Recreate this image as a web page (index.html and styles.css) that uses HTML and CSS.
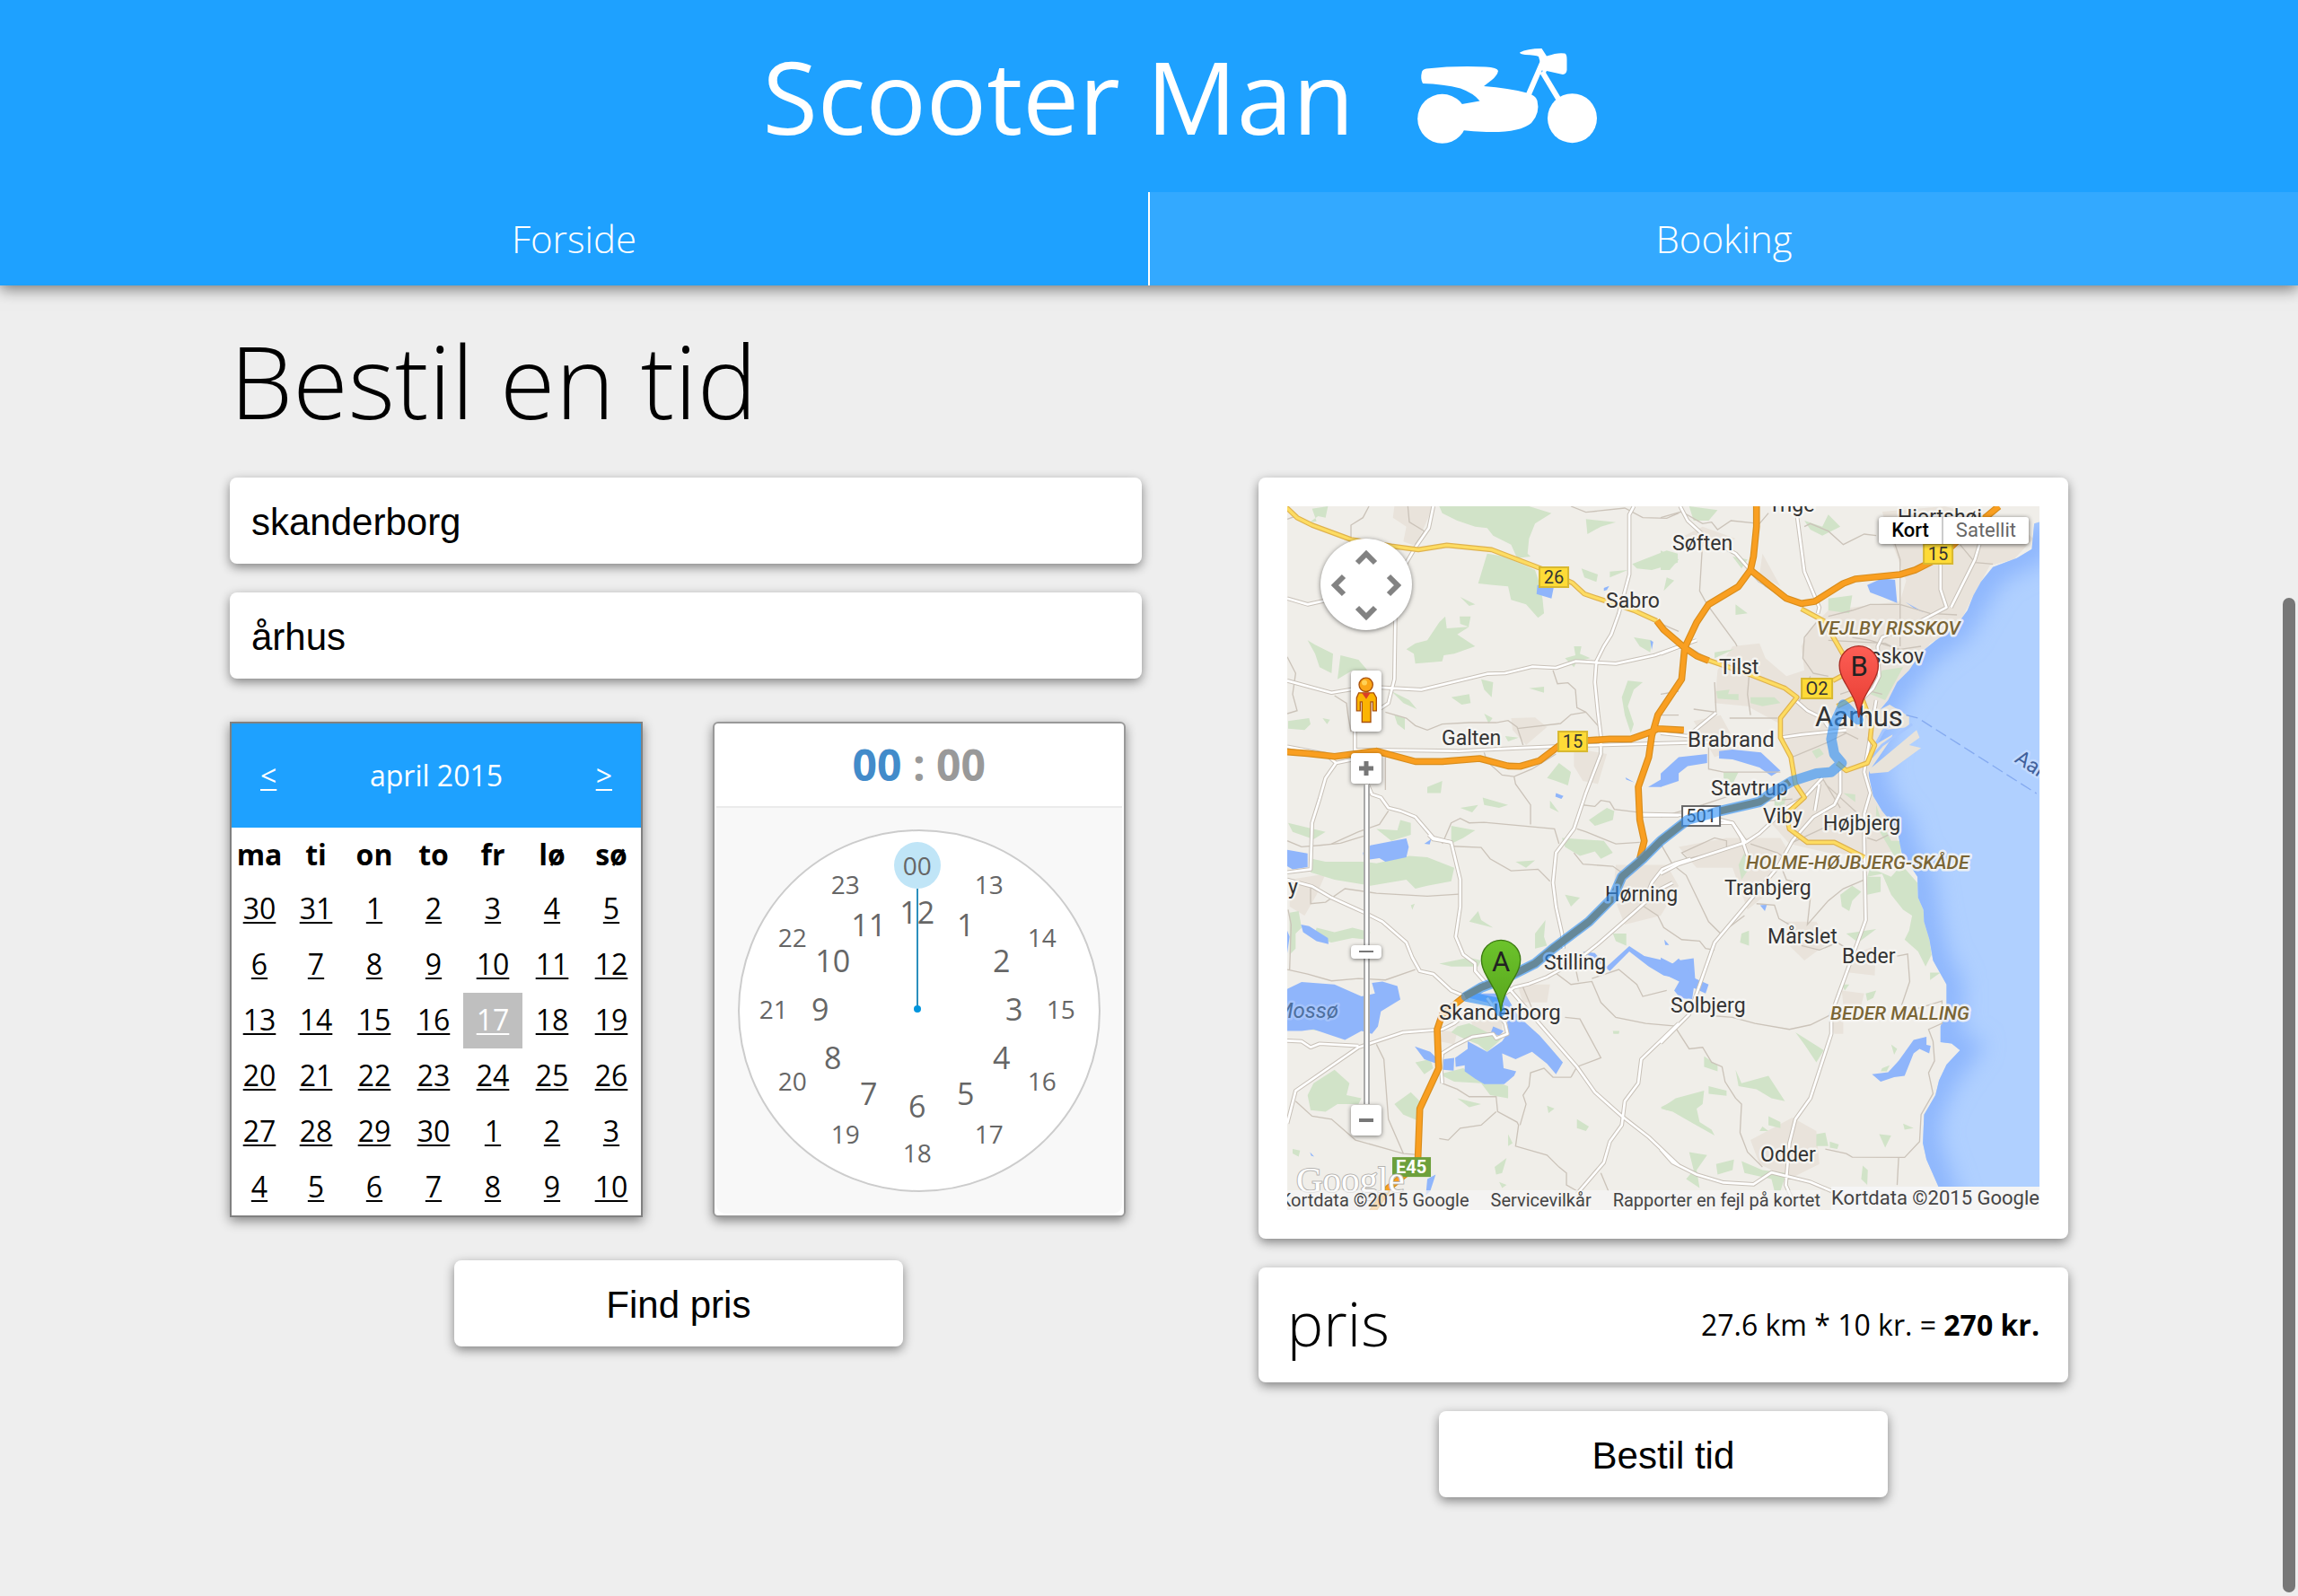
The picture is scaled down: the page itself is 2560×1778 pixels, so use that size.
FILE: index.html
```html
<!DOCTYPE html>
<html lang="da">
<head>
<meta charset="utf-8">
<title>Scooter Man - Booking</title>
<meta name="viewport" content="width=device-width, initial-scale=1">
<link rel="stylesheet" href="styles.css">
</head>
<body>
<header class="site-header">
  <div class="brand">
    <span class="brand-name">Scooter Man</span>
    <svg class="brand-icon" viewBox="1576 50 204 114" aria-hidden="true">
      <g fill="#fff">
        <circle cx="1605.700" cy="132.300" r="27.500"/>
        <circle cx="1750.500" cy="131.700" r="27.500"/>
        <path d="M1583 80Q1584 77 1588 76.500Q1620 73 1654 74.500Q1667 75 1668 79Q1667 84 1661 89L1652 96Q1680 98 1700 103.500Q1710 106 1711.500 112Q1715 126 1705 137Q1692 148 1655 147Q1640 146.500 1627 145L1618 122L1627.500 116L1647.500 112.500Q1641 104 1626 98.500Q1607 93.500 1584 93Q1581 88 1583 80Z"/>
        <path d="M1692 58.500Q1700 54 1716.500 54L1722 62.500Q1735 58 1742 59.500Q1744.500 60 1744.500 66V78Q1744 82.500 1740 83L1722 79L1719 85L1713 63Q1710 61.500 1698 61Q1692 60 1692 58.500Z"/>
      </g>
      <path d="M1702 105L1718 68M1717 80L1735 110" fill="none" stroke="#fff" stroke-width="6"/>
    </svg>
  </div>
  <nav class="tabs">
    <a href="#forside">Forside</a>
    <a href="#booking" class="active">Booking</a>
  </nav>
</header>

<main class="page">
  <h1>Bestil en tid</h1>
  <div class="columns">
    <form class="order">
      <input class="box field" type="text" value="skanderborg" aria-label="Fra">
      <input class="box field" type="text" value="århus" aria-label="Til">
      <div class="when">
        <table class="calendar">
          <colgroup><col class="c-first"><col class="c-second"><col><col><col><col><col></colgroup>
          <thead>
            <tr class="month"><td colspan="7"><div class="month-bar"><a href="#prev">&lt;</a><span>april 2015</span><a href="#next">&gt;</a></div></td></tr>
            <tr class="days"><th>ma</th><th>ti</th><th>on</th><th>to</th><th>fr</th><th>lø</th><th>sø</th></tr>
          </thead>
          <tbody>
            <tr><td><a href="#d">30</a></td><td><a href="#d">31</a></td><td><a href="#d">1</a></td><td><a href="#d">2</a></td><td><a href="#d">3</a></td><td><a href="#d">4</a></td><td><a href="#d">5</a></td></tr>
            <tr><td><a href="#d">6</a></td><td><a href="#d">7</a></td><td><a href="#d">8</a></td><td><a href="#d">9</a></td><td><a href="#d">10</a></td><td><a href="#d">11</a></td><td><a href="#d">12</a></td></tr>
            <tr><td><a href="#d">13</a></td><td><a href="#d">14</a></td><td><a href="#d">15</a></td><td><a href="#d">16</a></td><td class="today"><a href="#d">17</a></td><td><a href="#d">18</a></td><td><a href="#d">19</a></td></tr>
            <tr><td><a href="#d">20</a></td><td><a href="#d">21</a></td><td><a href="#d">22</a></td><td><a href="#d">23</a></td><td><a href="#d">24</a></td><td><a href="#d">25</a></td><td><a href="#d">26</a></td></tr>
            <tr><td><a href="#d">27</a></td><td><a href="#d">28</a></td><td><a href="#d">29</a></td><td><a href="#d">30</a></td><td><a href="#d">1</a></td><td><a href="#d">2</a></td><td><a href="#d">3</a></td></tr>
            <tr><td><a href="#d">4</a></td><td><a href="#d">5</a></td><td><a href="#d">6</a></td><td><a href="#d">7</a></td><td><a href="#d">8</a></td><td><a href="#d">9</a></td><td><a href="#d">10</a></td></tr>
          </tbody>
        </table>
        <div class="clock">
          <div class="clock-title"><span class="hours">00</span> : <span>00</span></div>
          <div class="clock-body">
            <div class="plate">
              <button type="button" class="tick on" style="left:198px;top:38px">00</button>
              <button type="button" class="tick" style="left:278px;top:59px">13</button>
              <button type="button" class="tick" style="left:337px;top:118px">14</button>
              <button type="button" class="tick" style="left:358px;top:198px">15</button>
              <button type="button" class="tick" style="left:337px;top:278px">16</button>
              <button type="button" class="tick" style="left:278px;top:337px">17</button>
              <button type="button" class="tick" style="left:198px;top:358px">18</button>
              <button type="button" class="tick" style="left:118px;top:337px">19</button>
              <button type="button" class="tick" style="left:59px;top:278px">20</button>
              <button type="button" class="tick" style="left:38px;top:198px">21</button>
              <button type="button" class="tick" style="left:59px;top:118px">22</button>
              <button type="button" class="tick" style="left:118px;top:59px">23</button>
              <button type="button" class="tick inner" style="left:198px;top:90px">12</button>
              <button type="button" class="tick inner" style="left:252px;top:104px">1</button>
              <button type="button" class="tick inner" style="left:292px;top:144px">2</button>
              <button type="button" class="tick inner" style="left:306px;top:198px">3</button>
              <button type="button" class="tick inner" style="left:292px;top:252px">4</button>
              <button type="button" class="tick inner" style="left:252px;top:292px">5</button>
              <button type="button" class="tick inner" style="left:198px;top:306px">6</button>
              <button type="button" class="tick inner" style="left:144px;top:292px">7</button>
              <button type="button" class="tick inner" style="left:104px;top:252px">8</button>
              <button type="button" class="tick inner" style="left:90px;top:198px">9</button>
              <button type="button" class="tick inner" style="left:104px;top:144px">10</button>
              <button type="button" class="tick inner" style="left:144px;top:104px">11</button>
              <svg class="hand" viewBox="0 0 400 400" aria-hidden="true"><path d="M198 64V198" stroke="#2b8fbd" stroke-width="2"/><circle cx="198" cy="198" r="4" fill="#0095dd"/></svg>
            </div>
          </div>
        </div>
      </div>
      <button type="button" class="box action">Find pris</button>
    </form>

    <section class="result">
      <div class="box map-card">
        <div class="map">
          <svg class="map-art" viewBox="0 0 838 784" role="img" aria-label="Rute fra Skanderborg til Aarhus">
            <defs>
              <linearGradient id="red" x1="0" y1="0" x2="0" y2="1"><stop offset="0" stop-color="#fd5e55"/><stop offset="1" stop-color="#e63b30"/></linearGradient>
              <linearGradient id="green" x1="0" y1="0" x2="0" y2="1"><stop offset="0" stop-color="#6cc32c"/><stop offset="1" stop-color="#58a51c"/></linearGradient>
              <filter id="soft" x="-20%" y="-10%" width="140%" height="120%"><feGaussianBlur stdDeviation="36"/></filter>
              <clipPath id="seaclip"><path d="M1280 180L1248 190L1240 275L1190 305L1110 335L1070 385L1045 430L1025 480L985 535L920 580L870 620L830 680L790 720L760 780L735 810L720 900L700 990L695 1030L710 1100L740 1150L790 1210L805 1290L858 1370L860 1440L878 1480L880 1520L898 1580L910 1650L955 1730V1810L935 1870V1923L972 1927L1000 1950L955 1998L930 2050L918 2100L880 2165L876 2260L888 2315L928 2406L960 2500H1280Z"/></clipPath>
            </defs>
            <rect width="838" height="784" fill="#f0eee9"/>
            <g transform="scale(.33333)">
              <!-- towns -->
              <g fill="#e9e3db">
                <path transform="translate(-132 -132)" d="M490 132H620L590 200L560 265L520 250L530 200L485 170ZM880 840L960 838L1000 870L930 930L885 880ZM1090 940L1200 960L1170 1060L1120 1050L1090 1000ZM1230 1330L1400 1330L1440 1400L1380 1500L1260 1530L1220 1430ZM140 1380L260 1360L230 1430L190 1500L140 1470ZM900 1730H1010L1000 1790L920 1790ZM620 1880L700 1890L690 1930L640 1920ZM740 1830H850V1900L760 1900Z"/>
                <path transform="translate(1248 -132)" d="M740 150L950 132L1080 170L1200 200L1245 240L1180 310L1100 330L1040 440L990 540L900 590L830 700L760 780L700 860L720 960L690 1040L720 1120L780 1200L800 1280L700 1300L560 1290L430 1260L360 1180L430 1060L440 980L400 860L290 800L180 790L190 680L240 600L330 590L350 640L420 700L480 680L470 600L500 540L560 480L800 450L820 380L790 300L760 220ZM60 240L140 200L250 240L180 280ZM340 290L400 400L330 360ZM110 850L200 830L260 940L180 970ZM60 1270L220 1240L400 1240L430 1290L380 1340L340 1440L290 1480L240 1340L120 1340ZM420 1520L520 1520L560 1590L480 1650L430 1600ZM610 1640L720 1600L715 1700L630 1690ZM605 1750L680 1760L670 1800L610 1800ZM570 1850H610V1895H580ZM300 2250L440 2175L520 2220L530 2330L430 2380L330 2330Z"/>
              </g>
              <!-- woods -->
              <g fill="#d1e3c8">
                <path transform="translate(-132 -132)" d="M640 132H940L1015 155L960 190L940 240L935 290L945 300L900 305L880 260L820 230L800 205L760 200L700 180L650 155ZM800 290L860 300L960 345L975 390L985 440L990 490L970 505L930 460L880 445L870 400L820 395L770 390ZM530 610L560 590L600 580L640 520L660 500L665 540L740 535L700 560L760 600L690 625L655 630L650 650L560 658L555 625ZM708 500L745 500L738 535L710 525ZM215 140L268 132L260 170L235 165L205 187L230 182ZM200 580L225 595L285 625L280 690L240 670L225 625ZM310 630L370 645L400 680L350 680L300 710ZM1130 175L1230 185L1180 200L1135 225ZM1285 325L1400 280L1437 290V320L1350 345L1300 340ZM1210 350L1270 345L1210 370ZM1115 340L1170 360L1165 385L1125 370ZM710 435L760 460L740 465ZM780 710L820 720L815 770L790 745ZM940 740L990 735V755ZM680 770L740 760L745 790L715 795ZM480 750L540 780L565 810L520 790ZM490 830L525 840V880L500 860ZM135 850L205 840L210 860L190 880L135 875ZM250 840L275 845L265 860ZM790 825L818 840L805 858ZM860 900L905 905L870 918ZM1090 600L1115 600L1110 625L1145 640L1100 650L1090 670L1060 640L1095 630ZM1290 570L1350 580L1345 620L1310 600ZM1270 715L1320 720L1290 745L1270 800L1290 860L1280 890L1260 830L1250 770ZM1000 1040L1040 990L1080 1020L1070 1065L1030 1050ZM600 1070L650 1050L645 1090L600 1090ZM785 1105L870 1130L840 1140L790 1130ZM710 1140L770 1130L750 1155ZM1010 1115L1040 1155L1010 1140ZM135 1190L260 1220L220 1245L150 1220ZM430 1210L500 1215L510 1180L545 1190V1230L480 1250ZM680 1200L760 1215L720 1240L680 1260ZM1140 1180L1200 1140L1225 1150L1220 1180L1160 1200Z"/>
                <path transform="translate(-132 1098)" d="M215 80L260 90L390 90L430 95L540 70L600 75L690 110L680 155L600 170L560 180L530 150L410 170L290 150L210 125ZM140 260L170 255L180 310L160 330L160 380L140 400ZM230 310L290 325L350 310L410 325L400 350L350 345L280 360L220 345ZM740 290L770 255L780 285L820 310ZM960 330L995 285L990 340L1000 370L960 380ZM640 430L740 410L780 420L770 440L680 440ZM220 830L290 785L340 830L330 870L380 880L370 900L300 900L260 925L210 920L200 870ZM490 900L545 860L575 890L580 960L520 935ZM560 760L610 750L620 780L590 800ZM640 800L720 780L780 810L870 840L870 880L810 870L780 830L690 825ZM700 640L740 630L800 660L850 680L800 725L770 700L720 680L680 660ZM700 880L780 900L740 910ZM1100 950L1140 975L1130 990L1100 980ZM825 1110L865 1080L850 1130L830 1135ZM840 1160L865 1170L850 1180ZM1380 910L1440 880V925L1400 920ZM1000 905L1025 915L1005 930ZM870 1000L885 1030L870 1040ZM1220 330L1265 330V370L1230 355ZM1050 10L1190 20L1220 60L1180 80L1160 55L1110 70L1060 40ZM1060 200L1110 210L1080 240ZM895 90L960 85L930 110ZM150 1050L175 1055L170 1075L150 1065ZM545 235L558 230L550 250ZM220 640L235 630L240 655L200 650ZM1220 655L1242 655L1240 665H1222Z"/>
                <path transform="translate(1248 -132)" d="M95 132L190 145L160 180L110 180ZM0 280L60 310L30 345L0 345ZM240 300L290 310L270 340ZM250 460L290 490L250 495ZM480 180L540 200L560 160L600 200L540 230L500 210ZM560 440L640 430L630 490L560 480ZM20 370L45 380L10 415ZM180 620L245 610L180 640ZM185 750L230 745L225 760L260 760V780L190 775ZM300 770L380 770L400 790L340 800L300 790ZM740 680L810 670L750 780L700 760ZM210 1020L260 1020L240 1060L210 1040ZM380 1110L420 1100L410 1140L380 1140ZM610 1090L650 1095L650 1120ZM505 950L530 940L545 960L520 975ZM690 810L735 820L720 850ZM720 1130L740 1190L770 1250L800 1250L805 1320L780 1300L720 1200ZM770 1370L805 1330L858 1390L860 1440L878 1480L880 1520L898 1580L905 1630L885 1670L860 1620L815 1580L830 1550L840 1500L810 1480L770 1430L740 1360L690 1370L700 1340ZM600 1430L640 1400L670 1420L640 1450L630 1485L605 1470ZM690 1370L735 1370L735 1420L690 1430ZM260 1330L280 1290L290 1350L270 1380ZM270 1560L295 1550V1600L265 1590ZM620 1560L720 1545L660 1590ZM900 1690L935 1690L900 1715ZM605 1730H630L615 1750ZM685 1760L720 1750L710 1775L690 1785ZM450 1890L545 1950L520 1990L480 1930ZM145 1970L190 2000V2020L145 2005ZM250 2015L270 2060L360 2035L415 2120L370 2110L320 2080L260 2070ZM160 2070L220 2085V2102L160 2095ZM0 2145L50 2110L145 2085L140 2130L120 2145L130 2190L170 2215L180 2235L100 2190L40 2155ZM95 2290L155 2300L120 2350L130 2410L85 2380L110 2350ZM185 2330L245 2315L240 2350L190 2365ZM270 2320L340 2350L420 2360L400 2420L380 2420L370 2380L280 2360ZM360 2170L400 2190V2210L360 2200ZM520 2230L550 2225L560 2270L520 2270ZM730 2230L770 2235L750 2275ZM810 2195L845 2210L815 2215ZM675 2335L692 2350L690 2400L670 2380ZM565 2255L595 2265L590 2280L565 2275ZM340 2205L360 2220L330 2220ZM770 1930L790 1945L780 1965ZM740 2010L765 2000L755 2020L735 2020Z"/>
              </g>
              <!-- water -->
              <g transform="translate(1248 -132)">
                <path d="M1280 180L1248 190L1240 275L1190 305L1110 335L1070 385L1045 430L1025 480L985 535L920 580L870 620L830 680L790 720L760 780L735 810L720 900L700 990L695 1030L710 1100L740 1150L790 1210L805 1290L858 1370L860 1440L878 1480L880 1520L898 1580L910 1650L955 1730V1810L935 1870V1923L972 1927L1000 1950L955 1998L930 2050L918 2100L880 2165L876 2260L888 2315L928 2406L960 2500H1280Z" fill="#b0d0ff"/>
                <g clip-path="url(#seaclip)"><path filter="url(#soft)" fill="none" stroke="#8db6fd" stroke-width="110" d="M1260 190L1240 275L1110 335L1045 430L985 535L870 620L790 720L735 810L700 990L695 1030L740 1150L790 1210L805 1290L858 1370L880 1520L910 1650L955 1730V1810L935 1923L1000 1950L930 2050L880 2165L876 2260L928 2406L960 2500"/></g>
                <path d="M735 810L765 795L830 835L830 870L740 880L715 930L775 895L770 910L705 1005L855 880L865 905L830 930L870 940L760 1020L700 1025L680 980L700 900Z" fill="#e8e3da"/>
                <path d="M800 835L745 880L720 925M705 970L740 930L840 860" stroke="#a5c6ff" stroke-width="9" fill="none"/>
                <path d="M820 830L860 840L1256 1092" stroke="#85aaf0" stroke-width="4" stroke-dasharray="40 16" fill="none"/>
              </g>
              <g fill="#8fb5fb">
                <path transform="translate(-132 -132)" d="M968 395L1023 400L1015 440L965 425ZM1190 405L1208 398L1200 412L1190 415ZM1345 580L1355 585L1350 612ZM1262 1038L1292 1055L1265 1045ZM1030 1090L1055 1100L1048 1110L1028 1102ZM1338 1070L1380 1045L1390 1020L1440 985V1050L1380 1070Z"/>
                <path transform="translate(-132 1098)" d="M132 50L200 62V108L150 115L132 105ZM385 60L410 35L530 12L538 40L530 75L460 90L440 78L390 85ZM590 30L613 14L608 32ZM178 300L205 305L268 345L270 365L230 355L185 325ZM132 515L180 492L290 500L380 540L425 530L415 495L450 490L500 505L510 550L445 590L435 640L415 665L380 655L325 685L280 670L220 650L180 655L132 655ZM750 530L860 530L900 600L930 630L975 670L1010 710L1053 760L1030 800L1000 765L950 725L895 750L850 730L855 780L897 790L890 805L857 833H790L760 815L725 790V770L695 775L693 745L735 715V690L800 725L850 690L870 660L865 600L800 560L740 545ZM820 640L855 655L840 672L813 660ZM558 707L610 725L650 765L640 768L590 750ZM655 750L690 745L688 788L652 785ZM1120 390L1160 395L1200 440L1275 372L1325 405L1390 420L1400 440L1440 420L1490 412L1495 480L1540 500L1530 530L1465 500L1440 480L1390 470L1340 440L1275 390L1210 455L1150 410ZM600 1150L628 1135L610 1190L595 1205ZM208 1060L222 1075L212 1072ZM132 320L140 340L132 395Z"/>
                <path transform="translate(1248 -132)" d="M690 395L740 373L783 378L790 455L740 435L700 420ZM818 452L880 487L850 475ZM195 950L240 945L335 955L400 1015L370 1033L330 1005L240 978L195 975ZM0 1025L60 970L155 960L155 990L90 1000L40 1040L0 1070ZM332 1465L355 1463L348 1485ZM0 1640L40 1660L60 1643L115 1710L105 1780L65 1775L45 1750L62 1720L20 1700L0 1670ZM706 2030L760 2023L795 1985L845 1915L888 1905V1932L902 1935L897 1960L865 1945L845 1960L815 2035L780 2040L735 2055ZM12 1580L28 1598L15 1598Z"/>
              </g>
              <!-- minor roads -->
              <g fill="none" stroke="#cbc3b9" stroke-width="4">
                <path transform="translate(-132 -132)" d="M405 132L385 170L345 195V240M535 132L540 185L590 215L560 260M132 175L160 165M1080 132L1130 152L1260 138L1320 170L1400 172L1440 155M132 635L160 690L150 760L165 815L132 825M290 765L330 790L335 830L345 885M460 820L530 840L560 865L600 880L650 860L740 855H830L870 848L900 870L920 930M900 875L1045 858L1080 828L1130 820L1170 865M1020 680L1035 725L1070 722L1095 745L1100 805L1130 820M1030 960L950 1010L890 1035L850 1030L800 985L790 955M890 1035L895 1060L945 1130V1195M470 1150L440 1195L370 1220L280 1260M1440 550L1370 520M650 1260L680 1190L710 1175L740 1190L790 1188L1025 1210L1040 1260M1100 1210L1130 1220L1230 1260L1310 1255M1120 1130L1160 1135L1180 1115L1210 1120L1225 1145L1310 1155M460 970V1080"/>
                <path transform="translate(-132 1098)" d="M132 20L180 40L240 35L310 28L400 0M210 170V230L260 225L325 180L430 195L600 205L705 198M685 38L780 42L810 80L880 120L970 115L1010 155M132 450L200 465L280 488L370 480L460 485L560 450M135 250L145 300L140 450M160 890L215 940L280 950L360 1020L520 1065L560 1068M430 700L455 750L470 950L520 1065M650 830L700 850L740 875H830L835 925L900 960L905 970L895 1040L1000 1070L1040 1110L1065 1130V1170L1100 1190M830 925L780 970L710 980L670 1020L640 1015M1080 810L1020 810L990 780L945 795L940 840L920 870L930 900L910 970M1080 810L1100 775L1180 745L1110 615L1060 610M920 510L950 580L1000 590M1000 440L1080 500L1150 490L1180 560L1230 610L1330 630L1440 640M1090 420L1105 490M1090 60L1120 98L1220 105L1270 140M1310 230L1370 270L1390 310L1450 350L1510 355L1530 380L1560 385M1150 480L1240 450L1300 500L1320 540L1400 520M1180 1130L1205 1190"/>
                <path transform="translate(1248 -132)" d="M0 170L70 150L140 190L170 185L190 210L235 180L330 190L360 155M140 250L130 415L155 460L250 590L255 600M300 350L350 400L430 450M480 200L500 190L560 215L610 260L680 225L720 230M1000 260L1050 320L1110 325M780 250L800 310V600M560 500L640 480L700 460H800L900 490L990 495M520 520L480 570L475 640L510 690L560 700M640 570L700 580L800 610L870 600M560 580L750 590L850 640M180 720L185 820L110 810M0 760L60 750M295 700L290 760L300 830M0 830H60M230 840L390 840M160 920V1010L210 1020L400 1020M440 970L560 920L620 890L660 910M620 890L560 870M460 790L500 700M600 760L660 740L740 760M260 1090L140 1130L0 1170M310 1120L440 1110M540 1040L600 1140M550 1060L660 1160M430 1260L560 1200L680 1180M70 1290L180 1240L220 1250V1280L90 1310ZM0 1260L40 1330L85 1365L160 1520L200 1560L280 1500M300 1260L390 1290L420 1310M320 1460L380 1465L395 1510L430 1530M500 1440L490 1530L560 1450L610 1410L680 1380M470 1600L530 1615L590 1590L640 1620M790 1635L825 1628L832 1720L805 1800M180 1835L240 1840L315 1860L430 1880L500 1865L570 1830M860 1810L940 1785V1860L895 1880L910 1920L915 1985L895 2025L910 2095L870 2165L865 2255L815 2308L640 2307L620 2295L550 2280M795 2308L790 2400M50 1875L95 1945L140 1940L170 1990L205 2005L215 2055L250 2110L270 2130L265 2225L290 2290L340 2340M690 1240L720 1250L760 1230M400 1330L420 1380L500 1400"/>
              </g>
              <!-- each road is drawn twice: a wide casing, then a narrower fill -->
              <defs>
                <g id="local" fill="none" stroke-linejoin="round">
                  <path transform="translate(-132 -132)" d="M620 132L605 205L560 270L495 380L490 710L470 790L440 810M1290 132L1275 160V360L1240 490L1215 560L1190 600L1165 650L1160 720L1170 820L1180 900V960L1130 1090L1090 1210L1030 1290L1020 1390L1030 1470L1050 1560L1055 1610M132 715L280 755L400 735L580 745L800 692L860 690L950 668L1030 672L1095 650L1230 658L1360 630L1500 580M132 440L200 460L290 440L400 440M358 880V945L700 950L900 940L1100 932L1560 920M132 935L260 960L295 990L390 970M295 990L260 1040L240 1110L215 1190L210 1345L132 1355M400 1060L415 1095L445 1105L470 1140L510 1150L560 1170L620 1240L680 1255M1440 1165H1300M1300 1160L1520 1165L1620 1190L1650 1240L1670 1300"/>
                  <path transform="translate(-132 1098)" d="M605 0L620 15L680 25L710 150V240L695 340L720 400L760 430V455L800 500M132 150L215 172L280 210L390 260L450 290L530 360L550 410L575 455L620 465L680 520L740 545M132 965L160 855L370 710L520 660L650 650L690 630L740 590M132 688L180 690L210 710L240 698L370 705M650 830L645 770L650 730L690 705L750 675L820 665L830 680L868 665L860 630L800 545M860 530L890 510L940 498L1000 475L1100 420L1170 365L1290 260L1380 180L1420 160M1330 210L1350 160L1385 115L1430 95L1480 80M870 510L1000 660L1100 775L1160 860L1250 940L1340 1010L1440 1105M1100 1200L1190 1095L1210 1025L1250 970L1260 890L1305 830L1315 750L1440 630"/>
                  <path transform="translate(1248 -132)" d="M65 132L90 180L150 235L250 290L330 380L400 420M455 160L480 350L530 470L525 490M1065 260L1050 310L970 470M935 325V410L955 470L850 525L740 570L725 600L730 700L710 740L670 780M0 625L90 590M80 600L145 640M0 890L90 900L185 822M400 905L470 895L620 880M450 780L490 815L540 840L560 870M285 1255L330 1225L420 1140L480 1105L540 1040M515 1150L530 1060M600 1015L600 1090L580 1130L510 1170L440 1250L390 1340L180 1590L120 1760L95 1830L0 1925M720 780L700 900L680 1020L700 1090L680 1160V1250L685 1515L570 1830V1895L500 2110L450 2180L430 2260L418 2400L440 2450M0 2280L40 2325L120 2365L210 2392L310 2398L370 2358L500 2390L570 2420M285 1255L60 1328L0 1360M200 1190L240 1190L285 1255"/>
                </g>
                <g id="yellow" fill="none" stroke-linejoin="round">
                  <path transform="translate(-132 -132)" d="M125 132L165 170L215 195L345 243L480 265L570 277L665 262L815 277L980 340L1085 388L1125 425L1200 450L1290 480L1367 515"/>
                  <path transform="translate(1248 -132)" d="M470 475L545 515L600 610L640 680L575 715M155 645L300 695L415 740L455 770L400 840V905L435 970L450 1060L480 1105L420 1160L430 1210L490 1255H580L680 1305M590 800L640 775L675 780L705 860L700 910L715 930L690 990L620 1015L590 990"/>
                </g>
                <g id="motorway" fill="none" stroke-linejoin="round">
                  <path transform="translate(-132 -132)" d="M125 952L200 958L290 968L430 950L560 985H650L775 975L870 1000L910 1001L975 982L1050 925L1130 915L1210 910L1280 910L1350 885L1370 875L1457 880M1367 515L1390 545L1460 605L1500 632L1540 648M1700 132V200L1690 300L1680 345L1640 400L1540 460L1500 520L1460 605L1450 710L1370 830L1350 900L1340 970L1305 1070L1310 1180L1325 1250L1310 1310"/>
                  <path transform="translate(1248 -132)" d="M300 345L420 440L470 457L515 450L610 390L650 375L800 360L850 345L930 305L1000 240L1130 132"/>
                  <path transform="translate(-132 1098)" d="M725 540L650 600L633 650L638 780L575 915L568 1100L470 1180L415 1260"/>
                </g>
              </defs>
              <use href="#local" stroke="#c8c1b8" stroke-width="14"/>
              <use href="#local" stroke="#fff" stroke-width="8"/>
              <use href="#yellow" stroke="#dfb24d" stroke-width="17"/>
              <use href="#yellow" stroke="#fddc62" stroke-width="10"/>
              <use href="#motorway" stroke="#d98d1c" stroke-width="23"/>
              <use href="#motorway" stroke="#f99f21" stroke-width="16"/>
              <!-- motorway stretch that the route follows -->
              <path transform="translate(1248 -132)" fill="none" stroke="#c07c00" stroke-width="24" stroke-linejoin="round" d="M430 1053L330 1120L200 1150L90 1180L0 1250L-60 1310L-130 1370L-160 1440L-240 1520L-360 1610L-420 1660L-520 1710L-600 1740L-655 1770"/>
            </g>
            <g class="labels">
              <text x="536" y="6">Trige</text><text x="680" y="20">Hjortshøj</text>
              <text x="429" y="49">Søften</text><text x="355" y="113">Sabro</text><text x="172" y="266">Galten</text>
              <text x="481" y="187">Tilst</text><text class="town" x="446" y="268">Brabrand</text><text x="472" y="322">Stavtrup</text>
              <text x="530" y="353">Viby</text><text x="597" y="361">Højbjerg</text><text x="709" y="175" text-anchor="end">Risskov</text>
              <text x="354" y="440">Hørning</text><text x="286" y="516">Stilling</text><text class="town" x="169" y="572">Skanderborg</text>
              <text x="427" y="564">Solbjerg</text><text x="527" y="730">Odder</text><text x="618" y="509">Beder</text>
              <text x="535" y="487">Mårslet</text><text x="487" y="433">Tranbjerg</text><text x="1" y="432">y</text>
              <text class="city" x="588" y="245">Aarhus</text>
              <text class="area" x="590" y="143">VEJLBY RISSKOV</text>
              <text class="area" x="511" y="404">HOLME-HØJBJERG-SKÅDE</text>
              <text class="area" x="605" y="572">BEDER MALLING</text>
              <text class="lake" x="57" y="570" text-anchor="end">Mossø</text>
              <text class="ferry" transform="translate(809 284) rotate(33)">Aarhus</text>
            </g>
            <g class="shields">
              <rect x="281" y="68" width="32" height="22"/><text x="297" y="86">26</text>
              <rect x="302" y="251" width="32" height="22"/><text x="318" y="269">15</text>
              <rect x="709" y="42" width="32" height="22"/><text x="725" y="60">15</text>
              <rect x="573" y="192" width="34" height="22"/><text x="590" y="210">O2</text>
              <rect class="plain" x="440" y="334" width="42" height="22"/><text x="461" y="352">501</text>
              <rect class="euro" x="117" y="725" width="43" height="22"/><text class="euro-text" x="138" y="743">E45</text>
            </g>
            <!-- driving route -->
            <g transform="scale(.33333) translate(1248 -132)" fill="none" stroke-linejoin="round" stroke-linecap="round">
              <path d="M660 845L610 795L580 860L570 910L580 960L605 990L570 1020L520 1025L440 1050L370 1090L330 1120L200 1150L90 1180L0 1250L-60 1310L-130 1370L-160 1440L-240 1520L-360 1610L-420 1660L-520 1710L-600 1740L-650 1770L-550 1790L-535 1820" stroke="#2f8ff5" stroke-opacity=".62" stroke-width="34"/>
            </g>
            <g transform="scale(.33333)">
              <g transform="translate(-132 1098)"><path d="M846 590C842 545 826 520 800 475C788 455 781 438 781 417A65 65 0 0 1 911 417C911 438 904 455 892 475C866 520 850 545 846 590Z" fill="url(#green)" stroke="#3c7a12" stroke-width="4"/></g>
              <g transform="translate(1248 -132)"><path d="M662 838C658 793 642 767 616 722C604 702 597 685 597 664A65 65 0 0 1 727 664C727 685 720 702 708 722C682 767 666 793 662 838Z" fill="url(#red)" stroke="#a92d24" stroke-width="4"/></g>
            </g>
            <text class="pin" x="238" y="518">A</text><text class="pin" x="637" y="189">B</text>
            <text class="watermark" x="10" y="764">Google</text>
          </svg>
          <div class="pan">
            <svg viewBox="0 0 102 102" aria-hidden="true"><g fill="none" stroke="#828282" stroke-width="6"><path d="M41 27L51 17L61 27M41 77L51 87L61 77M26 42L16 52L26 62M76 42L86 52L76 62"/></g></svg>
          </div>
          <button type="button" class="ctl pegman" aria-label="Street View">
            <svg viewBox="342 680 102 203" width="34" height="68" aria-hidden="true"><g stroke="#a9510c" stroke-width="4"><path d="M368 754H418L427 770V814H415V784H408V852H379V784H373V814H361V770Z" fill="#fbb402"/><path d="M378 754H407L393 775Z" fill="#d93f26" stroke="none"/><circle cx="392" cy="727" r="23" fill="#fba617"/></g><circle cx="387" cy="720" r="9" fill="#ffd257"/></svg>
          </button>
          <button type="button" class="ctl zoom-in" aria-label="Zoom ind"><svg viewBox="0 0 34 34" aria-hidden="true"><path d="M9 17H25M17 9V25" stroke="#777" stroke-width="5"/></svg></button>
          <input class="zoom" type="range" min="0" max="21" value="10" aria-label="Zoom">
          <button type="button" class="ctl zoom-out" aria-label="Zoom ud"><svg viewBox="0 0 34 34" aria-hidden="true"><path d="M9 17H25" stroke="#777" stroke-width="4"/></svg></button>
          <div class="map-type"><button type="button" class="selected">Kort</button><button type="button">Satellit</button></div>
          <div class="credits"><span>Kortdata ©2015 Google</span><a href="#terms">Servicevilkår</a><a href="#report">Rapporter en fejl på kortet</a></div>
          <div class="copyright">Kortdata ©2015 Google</div>
        </div>
      </div>
      <div class="box price"><h2>pris</h2><p>27.6 km * 10 kr. = <strong>270 kr.</strong></p></div>
      <button type="button" class="box action">Bestil tid</button>
    </section>
  </div>
</main>
<div class="scroll-thumb" aria-hidden="true"></div>
</body>
</html>
```
FILE: styles.css
```css
* { box-sizing: border-box; }

body {
  margin: 0;
  background: #eee;
  color: #000;
  font-family: "Open Sans", "Noto Sans", sans-serif;
  font-size: 32px;
}

button, input { font-family: inherit; }

/* header */
.site-header {
  position: relative;
  background: #1ea1ff;
  color: #fff;
  box-shadow: 0 4px 16px rgba(0, 0, 0, .5);
}
.brand {
  display: flex;
  justify-content: center;
  align-items: center;
  gap: 68px;
  height: 214px;
  padding-left: 70px;
}
.brand-name { font-size: 112px; line-height: 152px; }
.brand-icon { width: 204px; height: 114px; }
.tabs { display: flex; }
.tabs a {
  flex: 1;
  height: 104px;
  line-height: 104px;
  text-align: center;
  color: #fff;
  font-size: 42px;
  font-weight: 300;
  text-decoration: none;
}
.tabs .active { background: #33a9ff; border-left: 2px solid #fff; }

/* page */
.page { width: 80%; margin: 0 auto; padding: 30px 0 64px; }
h1 { margin: 0 0 32px; font-size: 112px; line-height: 152px; font-weight: 300; }
.columns { display: flex; justify-content: space-between; align-items: flex-start; }
.box {
  background: #fff;
  border: 0;
  border-radius: 8px;
  box-shadow: 0 4px 12px rgba(0, 0, 0, .45);
}

/* order form */
.order { width: 49.6%; display: flex; flex-direction: column; }
.field {
  width: 100%;
  height: 96px;
  margin-bottom: 32px;
  padding: 4px 24px 0;
  font-family: "Liberation Sans", Arial, sans-serif;
  font-size: 42px;
  color: #000;
}
.when {
  display: flex;
  justify-content: space-between;
  align-items: flex-start;
  margin: 16px 18px 48px 0;
}
.action {
  align-self: center;
  width: 500px;
  height: 96px;
  padding: 4px 0 0;
  font-family: "Liberation Sans", Arial, sans-serif;
  font-size: 42px;
  color: #000;
}
.order .action { margin-right: 16px; }

/* calendar */
.calendar {
  width: 460px;
  table-layout: fixed;
  border-collapse: separate;
  border-spacing: 0;
  border: 2px solid #808080;
  background: #fff;
  text-align: center;
  line-height: 44px;
  box-shadow: 0 4px 12px rgba(0, 0, 0, .45);
}
.calendar td, .calendar th { padding: 0; height: 62px; }
.calendar tbody td { padding-bottom: 2px; }
.calendar .days th { height: 60px; }
.calendar .c-first { width: 62px; }
.calendar .c-second { width: 64px; }
.calendar a { color: #000; text-decoration-thickness: 2px; text-underline-offset: 3px; }
.calendar .month td { height: 116px; background: #1ea1ff; color: #fff; }
.month-bar { display: flex; justify-content: space-between; padding: 0 32px; }
.calendar .month a, .calendar .today a { color: #fff; }
.calendar .today { background: #bfbfbf; }

/* clock */
.clock {
  width: 460px;
  height: 552px;
  border: 2px solid #999;
  border-radius: 6px;
  background: #fff;
  box-shadow: 0 4px 12px rgba(0, 0, 0, .45);
  padding: 0 2px 2px;
}
.clock-title {
  height: 94px;
  line-height: 92px;
  border-bottom: 2px solid #ebebeb;
  color: #999;
  font-size: 48px;
  font-weight: 700;
  text-align: center;
}
.clock-title .hours { color: #428bca; }
.clock-body {
  display: flex;
  justify-content: center;
  padding-top: 24px;
  height: 452px;
  border-radius: 0 0 10px 10px;
  background: #f8f8f8;
}
.plate {
  position: relative;
  width: 404px;
  height: 404px;
  border: 2px solid #ccc;
  border-radius: 50%;
  background: #fff;
}
.tick {
  position: absolute;
  width: 52px;
  height: 52px;
  margin: -26px 0 0 -26px;
  padding: 0;
  border: 0;
  border-radius: 50%;
  background: none;
  color: #666;
  font-size: 28px;
  line-height: 50px;
}
.tick.inner { font-size: 34px; }
.tick.on { background: #c0e5f7; }
.hand { position: absolute; left: 0; top: 0; width: 400px; height: 400px; pointer-events: none; }

/* map */
.result { width: 44.05%; display: flex; flex-direction: column; gap: 32px; }
.map-card { padding: 32px; }
.map { position: relative; overflow: hidden; font-family: Roboto, sans-serif; }
.map-art { display: block; width: 100%; height: auto; }
.labels text {
  font-size: 23px;
  fill: #333;
  stroke: #f7f6f3;
  stroke-opacity: .85;
  stroke-width: 5px;
  stroke-linejoin: round;
  paint-order: stroke;
}
.labels .town { font-size: 24px; }
.labels .city { font-size: 31px; }
.labels .area { font-size: 21px; font-style: italic; font-weight: 500; fill: #7a6535; }
.labels .lake { font-size: 24px; font-style: italic; fill: #4d6f9e; stroke: #a9c6fb; }
.labels .ferry { font-size: 23px; fill: #41619b; stroke: #c5dcff; }
.shields { font-size: 20px; text-anchor: middle; fill: #333; }
.shields rect { fill: #fedb37; stroke: #d8b830; stroke-width: 2px; }
.shields .plain { fill: #fff; stroke: #666; }
.shields .euro { fill: #6da03c; stroke: none; }
.shields .euro-text { fill: #fff; font-weight: 700; }
.pin { font-size: 31px; text-anchor: middle; fill: #222; }
.watermark {
  font-family: "Liberation Serif", serif;
  font-size: 41px;
  fill: #fff;
  stroke: #b5b3b0;
  stroke-width: 2px;
  paint-order: stroke;
}

/* map controls lie over the map */
.pan {
  position: absolute;
  left: 37px;
  top: 36px;
  width: 102px;
  height: 102px;
  border-radius: 50%;
  background: #fff;
  box-shadow: 0 1px 5px rgba(0, 0, 0, .5);
}
.ctl {
  position: absolute;
  left: 71px;
  width: 34px;
  height: 34px;
  padding: 0;
  border: 0;
  border-radius: 4px;
  background: #fff;
  box-shadow: 0 1px 5px rgba(0, 0, 0, .5);
}
.ctl svg { display: block; }
.pegman { top: 183px; height: 68px; }
.zoom-in { top: 275px; }
.zoom-out { top: 667px; }
.zoom {
  position: absolute;
  left: 71px;
  top: 310px;
  width: 34px;
  height: 356px;
  margin: 0;
  appearance: none;
  background: linear-gradient(90deg, transparent 14px, #aaa 14px 16px, #fff 16px 19px, #aaa 19px 21px, transparent 21px);
  writing-mode: vertical-lr;
  direction: rtl;
}
.zoom::-webkit-slider-thumb {
  appearance: none;
  width: 34px;
  height: 15px;
  border-radius: 4px;
  background: linear-gradient(#777, #777) center / 16px 2px no-repeat #fff;
  box-shadow: 0 1px 4px rgba(0, 0, 0, .5);
}
.map-type {
  position: absolute;
  top: 12px;
  right: 12px;
  display: flex;
  height: 30px;
  border-radius: 3px;
  background: #fff;
  box-shadow: 0 1px 5px rgba(0, 0, 0, .6);
}
.map-type button {
  padding: 0 14px;
  border: 0;
  background: none;
  color: #666;
  font-size: 22px;
  line-height: 28px;
}
.map-type .selected { color: #000; font-weight: 500; border-right: 2px solid #ccc; }
.credits {
  position: absolute;
  right: 244px;
  bottom: 0;
  display: flex;
  gap: 24px;
  width: 600px;
  justify-content: flex-end;
  white-space: nowrap;
  background: rgba(245, 245, 245, .7);
  font-size: 20px;
  line-height: 22px;
  color: #444;
}
.credits a { color: #444; text-decoration: none; }
.copyright {
  position: absolute;
  right: 0;
  bottom: 0;
  background: #f5f5f5;
  color: #444;
  font-size: 22px;
  line-height: 26px;
}

/* price */
.price {
  display: flex;
  justify-content: space-between;
  align-items: center;
  height: 128px;
  padding: 0 32px;
}
.price h2 { margin: 0; font-size: 68px; line-height: 92px; font-weight: 300; padding-bottom: 4px; }
.price p { margin: 0; line-height: 44px; }

.scroll-thumb {
  position: fixed;
  top: 666px;
  right: 3px;
  bottom: 4px;
  width: 14px;
  border-radius: 7px;
  background: #777;
}
```
